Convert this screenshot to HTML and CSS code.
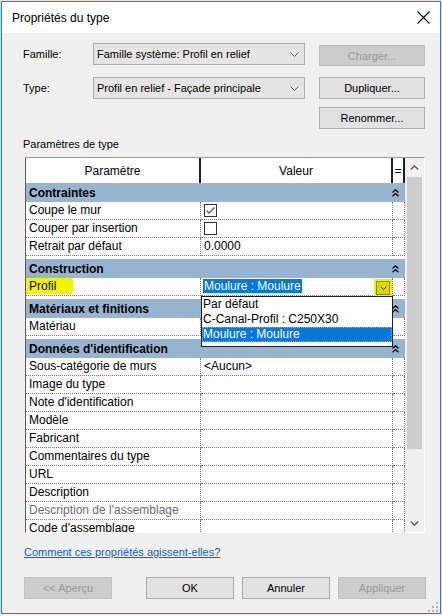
FILE: index.html
```html
<!DOCTYPE html>
<html lang="fr">
<head>
    <meta charset="UTF-8">
    <title>Propriétés du type</title>
    <link rel="stylesheet" href="styles.css">
</head>
<body>
    <div class="window">
        <div class="titlebar">
            <span class="title">Propriétés du type</span>
            <svg class="close" width="13" height="13" viewBox="0 0 13 13"><path d="M0.5 0.5 L12.5 12.5 M12.5 0.5 L0.5 12.5" stroke="#000" stroke-width="1.1" fill="none"/></svg>
        </div>

        <div class="content">
            <!-- Famille / Type -->
            <div class="type-form">
                <label class="form-label">Famille:</label>
                <div class="combo">
                    <span>Famille système: Profil en relief</span>
                    <svg width="9" height="5" viewBox="0 0 9 5"><path d="M0.5 0.5 L4.5 4.5 L8.5 0.5" stroke="#606060" fill="none"/></svg>
                </div>
                <button class="btn btn-charger" disabled>Charger...</button>

                <label class="form-label">Type:</label>
                <div class="combo">
                    <span>Profil en relief - Façade principale</span>
                    <svg width="9" height="5" viewBox="0 0 9 5"><path d="M0.5 0.5 L4.5 4.5 L8.5 0.5" stroke="#606060" fill="none"/></svg>
                </div>
                <button class="btn">Dupliquer...</button>

                <button class="btn btn-rename">Renommer...</button>
            </div>

            <div class="section-label">Paramètres de type</div>

            <!-- Property grid -->
            <div class="grid-frame">
                <div class="grid-main">
                    <div class="grid-head">
                        <div class="hcell">Paramètre</div>
                        <div class="hcell">Valeur</div>
                        <div class="hcell">=</div>
                    </div>

                    <div class="grid-body">
                        <div class="section">
                            <div class="group"><span>Contraintes</span><svg class="collapse" width="7" height="8" viewBox="0 0 7 8"><path d="M0.5 3.5 L3.5 0.8 L6.5 3.5 M0.5 7.3 L3.5 4.6 L6.5 7.3" stroke="#000" stroke-width="1.3" fill="none"/></svg></div>
                            <div class="row">
                                <div class="cell">Coupe le mur</div>
                                <div class="cell"><span class="check"><svg width="11" height="11" viewBox="0 0 11 11"><path d="M1.5 5.5 L4 8 L9.5 2.5" stroke="#5a5a5a" stroke-width="1.3" fill="none"/></svg></span></div>
                                <div class="cell"></div>
                            </div>
                            <div class="row">
                                <div class="cell">Couper par insertion</div>
                                <div class="cell"><span class="check"></span></div>
                                <div class="cell"></div>
                            </div>
                            <div class="row">
                                <div class="cell">Retrait par défaut</div>
                                <div class="cell">0.0000</div>
                                <div class="cell"></div>
                            </div>
                        </div>

                        <div class="section">
                            <div class="group"><span>Construction</span><svg class="collapse" width="7" height="8" viewBox="0 0 7 8"><path d="M0.5 3.5 L3.5 0.8 L6.5 3.5 M0.5 7.3 L3.5 4.6 L6.5 7.3" stroke="#000" stroke-width="1.3" fill="none"/></svg></div>
                            <div class="row">
                                <div class="cell"><span class="marked">Profil</span></div>
                                <div class="cell cell-open">
                                    <span class="sel">Moulure : Moulure</span>
                                    <span class="drop-btn"><span class="drop-inner"><svg width="7" height="4" viewBox="0 0 7 4"><path d="M0.5 0.5 L3.5 3.5 L6.5 0.5" stroke="#3c3c00" fill="none"/></svg></span></span>
                                    <div class="listbox">
                                        <div class="opt">Par défaut</div>
                                        <div class="opt">C-Canal-Profil : C250X30</div>
                                        <div class="opt active">Moulure : Moulure</div>
                                    </div>
                                </div>
                                <div class="cell"></div>
                            </div>
                        </div>

                        <div class="section">
                            <div class="group"><span>Matériaux et finitions</span><svg class="collapse" width="7" height="8" viewBox="0 0 7 8"><path d="M0.5 3.5 L3.5 0.8 L6.5 3.5 M0.5 7.3 L3.5 4.6 L6.5 7.3" stroke="#000" stroke-width="1.3" fill="none"/></svg></div>
                            <div class="row">
                                <div class="cell">Matériau</div>
                                <div class="cell"></div>
                                <div class="cell"></div>
                            </div>
                        </div>

                        <div class="section">
                            <div class="group"><span>Données d'identification</span><svg class="collapse" width="7" height="8" viewBox="0 0 7 8"><path d="M0.5 3.5 L3.5 0.8 L6.5 3.5 M0.5 7.3 L3.5 4.6 L6.5 7.3" stroke="#000" stroke-width="1.3" fill="none"/></svg></div>
                            <div class="row"><div class="cell">Sous-catégorie de murs</div><div class="cell">&lt;Aucun&gt;</div><div class="cell"></div></div>
                            <div class="row"><div class="cell">Image du type</div><div class="cell"></div><div class="cell"></div></div>
                            <div class="row"><div class="cell">Note d'identification</div><div class="cell"></div><div class="cell"></div></div>
                            <div class="row"><div class="cell">Modèle</div><div class="cell"></div><div class="cell"></div></div>
                            <div class="row"><div class="cell">Fabricant</div><div class="cell"></div><div class="cell"></div></div>
                            <div class="row"><div class="cell">Commentaires du type</div><div class="cell"></div><div class="cell"></div></div>
                            <div class="row"><div class="cell">URL</div><div class="cell"></div><div class="cell"></div></div>
                            <div class="row"><div class="cell">Description</div><div class="cell"></div><div class="cell"></div></div>
                            <div class="row"><div class="cell cell-disabled">Description de l'assemblage</div><div class="cell"></div><div class="cell"></div></div>
                            <div class="row"><div class="cell">Code d'assemblage</div><div class="cell"></div><div class="cell"></div></div>
                        </div>
                    </div>
                </div>

                <div class="scrollbar">
                    <div class="sb-arrow"><svg width="9" height="5" viewBox="0 0 9 5"><path d="M0.8 4.5 L4.5 0.9 L8.2 4.5" stroke="#606060" stroke-width="1.4" fill="none"/></svg></div>
                    <div class="sb-thumb"></div>
                    <div class="sb-fill"></div>
                    <div class="sb-arrow sb-down"><svg width="9" height="5" viewBox="0 0 9 5"><path d="M0.8 0.5 L4.5 4.1 L8.2 0.5" stroke="#606060" stroke-width="1.4" fill="none"/></svg></div>
                </div>
            </div>

            <a class="help-link" href="#">Comment ces propriétés agissent-elles?</a>

            <div class="footer">
                <button class="btn btn-preview" disabled>&lt;&lt; Aperçu</button>
                <button class="btn">OK</button>
                <button class="btn">Annuler</button>
                <button class="btn" disabled>Appliquer</button>
            </div>
        </div>

        <svg class="grip" width="10" height="10" viewBox="0 0 10 10" fill="#b4b4b4">
            <rect x="8" y="0" width="2" height="2"/>
            <rect x="4" y="4" width="2" height="2"/><rect x="8" y="4" width="2" height="2"/>
            <rect x="0" y="8" width="2" height="2"/><rect x="4" y="8" width="2" height="2"/><rect x="8" y="8" width="2" height="2"/>
        </svg>
    </div>
</body>
</html>
```

FILE: styles.css
```css
/* Propriétés du type - dialog */

* {
    box-sizing: border-box;
}

body {
    margin: 0;
    background: #f7f7f7;
    font-family: "Liberation Sans", Arial, sans-serif;
    color: #000;
}

.window {
    position: relative;
    width: 440px;
    height: 613px;
    margin: 1px 0 0 1px;
    border: 1px solid #1883d7;
    background: #f0f0f0;
    box-shadow: 0 1px 3px rgba(0, 0, 0, 0.35);
}

/* Title bar */
.titlebar {
    height: 31px;
    background: #fff;
    display: flex;
    align-items: center;
    justify-content: space-between;
    padding: 0 10px 0 10px;
    font-size: 12px;
}

.close {
    display: block;
}

/* Content */
.content {
    padding: 10px 14px 0 21px;
    font-size: 11px;
}

.type-form {
    display: grid;
    grid-template-columns: 56px 212px 106px;
    grid-template-rows: 34px 30px 22px;
    column-gap: 14px;
    align-items: start;
}

.form-label {
    line-height: 22px;
}

.combo {
    height: 22px;
    border: 1px solid #acacac;
    background: #e5e5e5;
    display: flex;
    align-items: center;
    justify-content: space-between;
    padding: 0 5px 0 3px;
}

.btn {
    height: 22px;
    border: 1px solid #adadad;
    background: #e1e1e1;
    font-family: inherit;
    font-size: 11px;
    color: #000;
    padding: 0;
}

.btn:disabled {
    background: #cccccc;
    border-color: #bfbfbf;
    color: #9a9a9a;
}

.btn-charger {
    height: 21px;
    margin-top: 2px;
}

.btn-rename {
    grid-column: 3;
}

.section-label {
    margin-top: 8px;
    line-height: 14px;
}

/* Property grid */
.grid-frame {
    display: flex;
    width: 400px;
    height: 376px;
    margin: 6px 0 0 2px;
    border: 1px solid;
    border-color: #9a9a9a #fff #fff #5a5a5a;
    background: #fff;
}

.grid-main {
    width: 379px;
    display: flex;
    flex-direction: column;
    font-size: 12px;
}

.grid-head {
    display: grid;
    grid-template-columns: 175px 192px 12px;
    height: 25px;
}

.hcell {
    display: flex;
    align-items: center;
    justify-content: center;
    border-right: 2px solid #1e1e1e;
}

.grid-body {
    height: 349px;
    overflow: hidden;
}

.section + .section {
    margin-top: 3px;
}

.group {
    height: 19px;
    background: #99b4d1;
    display: flex;
    align-items: center;
    justify-content: space-between;
    padding: 0 6px 0 3px;
    font-weight: bold;
}

.collapse {
    display: block;
}

.row {
    display: grid;
    grid-template-columns: 175px 192px 12px;
    height: 18px;
}

.cell {
    position: relative;
    border-right: 1px dotted #7a7a7a;
    border-bottom: 1px dotted #7a7a7a;
    padding-left: 3px;
    line-height: 17px;
    white-space: nowrap;
    overflow: hidden;
}

.cell-disabled {
    color: #6d6d6d;
}

.check {
    display: block;
    width: 13px;
    height: 13px;
    margin-top: 2px;
    border: 1px solid #333;
    background: #fff;
}

.check svg {
    display: block;
}

/* Highlighter mark on "Profil" */
.marked {
    position: relative;
    z-index: 0;
}

.marked::before {
    content: "";
    position: absolute;
    left: -4px;
    right: -17px;
    top: -4px;
    bottom: -1px;
    background: #f4f400;
    border-radius: 4px 6px 3px 2px;
    z-index: -1;
}

/* Open combo in the value column */
.cell-open {
    overflow: visible;
}

.sel {
    margin-left: -1px;
    padding: 0 1px;
    background: #0078d7;
    color: #fff;
}

.drop-btn {
    position: absolute;
    right: 0;
    top: 1px;
    width: 18px;
    height: 18px;
    background: #f2f200;
    display: flex;
    align-items: center;
    justify-content: center;
}

.drop-inner {
    width: 14px;
    height: 14px;
    border: 1px solid #8a8a00;
    background: #d9d900;
    display: flex;
    align-items: center;
    justify-content: center;
}

.listbox {
    position: absolute;
    left: 0;
    top: 18px;
    width: 192px;
    height: 51px;
    border: 1px solid #1a1a1a;
    background: #fff;
    z-index: 5;
}

.opt {
    height: 15px;
    line-height: 15px;
    padding-left: 1px;
}

.opt.active {
    background: #0078d7;
    color: #fff;
    outline: 1px dotted #e89a50;
    outline-offset: -1px;
}

/* Scrollbar */
.scrollbar {
    width: 19px;
    background: #f0f0f0;
    display: flex;
    flex-direction: column;
    align-items: center;
}

.sb-arrow {
    height: 19px;
    display: flex;
    align-items: center;
    justify-content: center;
}

.sb-down {
    height: 17px;
}

.sb-thumb {
    width: 15px;
    height: 272px;
    background: #cdcdcd;
}

.sb-fill {
    flex: 1;
}

/* Bottom */
.help-link {
    display: block;
    margin: 12px 0 0 1px;
    line-height: 14px;
    color: #0066cc;
    text-decoration: underline;
}

.footer {
    display: flex;
    margin-top: 18px;
    padding-left: 1px;
}

.footer .btn {
    width: 88px;
    margin-left: 8px;
}

.footer .btn-preview {
    margin-left: 0;
    margin-right: auto;
}

.grip {
    position: absolute;
    right: 2px;
    bottom: 1px;
}
```
